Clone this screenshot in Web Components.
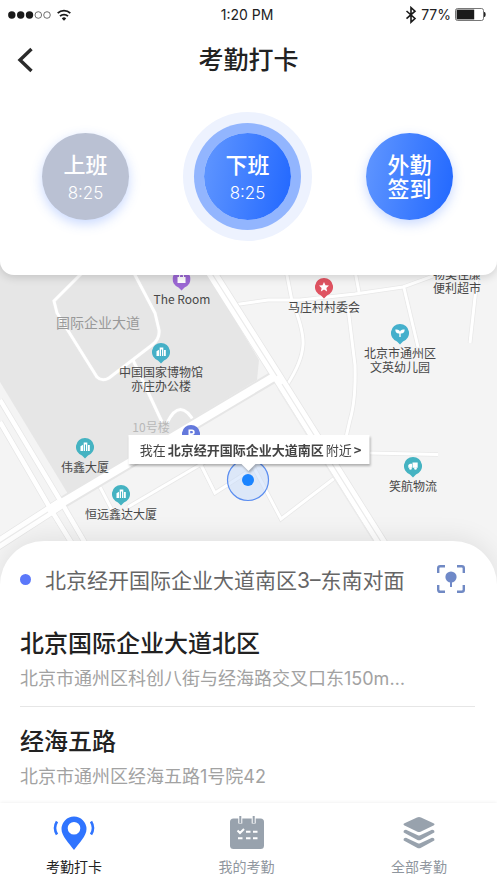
<!DOCTYPE html>
<html lang="zh-CN">
<head>
<meta charset="utf-8">
<meta name="viewport" content="width=device-width,initial-scale=1">
<title>考勤打卡</title>
<style>
  body{
    margin:0;
    background:#fff;
    color:#222;
    font-family:Inter,"Noto Sans CJK SC",sans-serif;
    --color-primary:#2f74ff;
    --color-linear:linear-gradient(100deg,#5c93ff 8%,#266bff 92%);
  }
</style>
</head>
<body>
<attend-page>
  <status-bar slot="top" time="1:20 PM" battery="77%"></status-bar>
  <nav-header slot="top">考勤打卡</nav-header>
  <punch-group slot="top">
    <punch-button type="done">上班<span slot="time">8:25</span></punch-button>
    <punch-button type="active">下班<span slot="time">8:25</span></punch-button>
    <punch-button type="out">外勤<br>签到</punch-button>
  </punch-group>

  <area-map slot="map">
    <map-pin x="182" y="24" icon="bag" color="#9b67d3">The Room</map-pin>
    <map-pin x="98" y="67" type="road">国际企业大道</map-pin>
    <map-pin x="161" y="97" icon="building" color="#45b0c7">中国国家博物馆<br>亦庄办公楼</map-pin>
    <map-pin x="324" y="32" icon="star" color="#df5361">马庄村村委会</map-pin>
    <map-pin x="457" y="26" type="text">物美佳廉<br>便利超市</map-pin>
    <map-pin x="400" y="78" icon="leaf" color="#45b0cc">北京市通州区<br>文英幼儿园</map-pin>
    <map-pin x="151" y="172" type="faint">10号楼</map-pin>
    <map-pin x="191" y="179" icon="parking" color="#6479dc"></map-pin>
    <map-pin x="85" y="192" icon="building" color="#45b3c2">伟鑫大厦</map-pin>
    <map-pin x="121" y="239" icon="building" color="#45b3c2">恒远鑫达大厦</map-pin>
    <map-pin x="413" y="211" icon="truck" color="#45b3c2">笑航物流</map-pin>
    <map-callout>北京经开国际企业大道南区</map-callout>
  </area-map>

  <place-sheet slot="sheet">
    <span slot="current">北京经开国际企业大道南区3–东南对面</span>
    <place-item>北京国际企业大道北区<span slot="address">北京市通州区科创八街与经海路交叉口东150m…</span></place-item>
    <place-item>经海五路<span slot="address">北京市通州区经海五路1号院42</span></place-item>
  </place-sheet>

  <tab-bar slot="tabs">
    <tab-item icon="punch" active>考勤打卡</tab-item>
    <tab-item icon="calendar">我的考勤</tab-item>
    <tab-item icon="layers">全部考勤</tab-item>
  </tab-bar>
</attend-page>

<script>
class BaseElement extends HTMLElement{
  constructor(){
    super();
    this.shadow=this.attachShadow({mode:'open'});
  }
  connectedCallback(){
    this.shadow.innerHTML=this.render();
  }
}

class AttendPage extends BaseElement{
  render(){
    return `
<style>
    :host{
      display:flex;
      flex-direction:column;
      min-height:100vh;
    }
    header{
      position:relative;
      z-index:2;
      background:#fff;
      border-radius:0 0 14px 14px;
      box-shadow:0 2px 10px rgba(0,0,0,.16);
    }
    /* the map runs on under the round corners of the card and the sheet */
    main{
      flex:1;
      display:flex;
      min-height:336px;
      margin:-20px 0 -50px;
    }
    section{
      position:relative;
      z-index:2;
      background:#fff;
      border-radius:44px 44px 0 0;
      box-shadow:0 -4px 24px rgba(0,0,0,.08);
    }
    footer{
      position:relative;
      z-index:3;
      background:#fff;
      box-shadow:0 0 4px rgba(0,0,0,.08);
    }
</style>
<header><slot name="top"></slot></header>
<main><slot name="map"></slot></main>
<section><slot name="sheet"></slot></section>
<footer><slot name="tabs"></slot></footer>
    `
  }
}

class StatusBar extends BaseElement{
  render(){
    return `
<style>
    :host{
      display:grid;
      grid-template-columns:1fr auto 1fr;
      align-items:center;
      height:29px;
      padding:0 11px 0 8px;
      font-size:14px;
      font-weight:400;
    }
    div{
      display:flex;
      align-items:center;
      gap:6px;
    }
    .right{
      justify-content:flex-end;
      gap:4px;
    }
    svg{display:block}
</style>
<div>
  <svg width="43" height="8" viewBox="0 0 43 8">
    <g fill="#1a1a1a"><circle cx="3.8" cy="4" r="3.7"/><circle cx="12.7" cy="4" r="3.7"/><circle cx="21.5" cy="4" r="3.7"/></g>
    <g fill="none" stroke="#333" stroke-width=".7"><circle cx="30.3" cy="4" r="3.3"/><circle cx="39" cy="4" r="3.3"/></g>
  </svg>
  <svg width="14" height="12" viewBox="0 0 14 12">
    <g fill="none" stroke="#1a1a1a" stroke-width="1.8"><path d="M.7 4.1a9 9 0 0 1 12.6 0"/><path d="M3 7.2a5.7 5.7 0 0 1 8 0"/></g>
    <path d="M4.8 9.4a3.2 3.2 0 0 1 4.4 0L7 11.8z" fill="#1a1a1a"/>
  </svg>
</div>
<span>${this.getAttribute("time")}</span>
<div class="right">
  <svg width="12" height="18" viewBox="0 0 12 18"><path d="M1.5 5 10 12.5 6 16.2V1.6L10 5.2 1.5 12.7" fill="none" stroke="#1a1a1a" stroke-width="1.6"/></svg>
  <span>${this.getAttribute("battery")}</span>
  <svg width="31" height="13" viewBox="0 0 31 13">
    <rect x=".5" y=".5" width="28" height="12" rx="2" fill="#fff" stroke="#555" stroke-width=".8"/>
    <rect x="1.6" y="1.6" width="17.6" height="9.8" fill="#1a1a1a"/>
    <path d="M29.6 4.3q1.2 2.2 0 4.4z" fill="#1a1a1a" stroke="#1a1a1a"/>
  </svg>
</div>
    `
  }
}

class NavHeader extends BaseElement{
  render(){
    return `
<style>
    :host{
      display:grid;
      grid-template-columns:1fr auto 1fr;
      align-items:center;
      height:62px;
      padding:0 16px;
    }
    button{
      justify-self:start;
      padding:0;
      border:0;
      background:none;
    }
    svg{display:block}
    h1{
      margin:0;
      font-size:25px;
      line-height:36px;
      font-weight:500;
    }
</style>
<button aria-label="返回"><svg width="20" height="26" viewBox="0 0 20 26"><path d="M15.500 2 4 13l11.500 11" fill="none" stroke="#2b2b2b" stroke-width="3.400"/></svg></button>
<h1><slot></slot></h1>
    `
  }
}

class PunchGroup extends BaseElement{
  render(){
    return `
<style>
    :host{
      display:flex;
      justify-content:space-between;
      padding:42px 44px 55px 42px;
    }
</style>
<slot></slot>
    `
  }
}

class PunchButton extends BaseElement{
  render(){
    return `
<style>
    :host{display:block}
    button{
      display:flex;
      flex-direction:column;
      align-items:center;
      justify-content:center;
      width:87px;
      height:87px;
      padding:0;
      border:0;
      border-radius:50%;
      background:var(--color-linear);
      box-shadow:0 4px 12px rgba(60,120,255,.28);
      color:#fff;
      font:500 22px/24px Inter,"Noto Sans CJK SC",sans-serif;
    }
    .done,.active{padding-top:4px}
    .done{background:#bac1d3}
    .active{box-shadow:0 0 0 10px #92b5fe,0 0 0 21px #edf2fe}
    ::slotted([slot=time]){
      margin-top:4px;
      font-size:17px;
      font-weight:300;
    }
</style>
<button class="${this.getAttribute("type")}"><span><slot></slot></span><slot name="time"></slot></button>
    `
  }
}

class AreaMap extends BaseElement{
  render(){
    const double=["M0 400 60 500 95 560","M0 422 50 508 82 560"];
    const thin=[
      "M100 255 54 301 57 313 97 377Q102 382 109 378L152 345Q160 339 159 330L155 313 135 275 123 255",
      "M133 360 162 422","M167 423Q180 396 195 423",
      "M233 305 268 300H300L355 294 403 287 436 275 460 262",
      "M283 255 292 301Q304 330 303 345 302 362 287 385",
      "M352 255 359 292","M348 308 355 365Q356 400 350 420L344 446",
      "M404 288 418 347","M478 270 470 343","M370 453 438 454.500",
      "M336 477 281 519 250 460","M128 507 215 456","M100 487 112 510","M196 455 215 493 246 473"
    ];
    return `
<style>
    :host{
      display:block;
      position:relative;
      flex:1;
      overflow:hidden;
      background:#f4f4f4;
    }
    svg{
      position:absolute;
      inset:0;
      width:100%;
      height:100%;
    }
</style>
<svg viewBox="0 255 497 336" preserveAspectRatio="none" fill="none" aria-hidden="true">
  <path d="M0 255H196L259 360 257 380 68 494 0 382z" fill="#e6e6e6"/>
  ${thin.map(d=>`<path d="${d}" stroke="#e8e8e8" stroke-width="4.500"/>`).join("")}
  ${thin.map(d=>`<path d="${d}" stroke="#fff" stroke-width="3"/>`).join("")}
  ${double.map(d=>`<path d="${d}" stroke="#e6e6e6" stroke-width="6"/>`).join("")}
  <path d="M-5 546 60 504 277 375M196 248 277 376 400 572" stroke="#e6e6e6" stroke-width="12"/>
  <path d="M-5 546 60 504M196 248 277 376 400 572" stroke="#fff" stroke-width="10.500"/>
  <path d="M55 507 277 375" stroke="#fff" stroke-width="8"/>
  ${double.map(d=>`<path d="${d}" stroke="#fff" stroke-width="4.500"/>`).join("")}
  <path d="M-5 546 48 512M209 269 277 376M282 384 400 572M278 389 396 577" stroke="#ebebeb" stroke-width="1.200"/>
  <circle cx="248" cy="480" r="20.500" fill="#c9dcfb" fill-opacity=".55" stroke="#5a8df0" stroke-width="1.200"/>
  <circle cx="248" cy="480" r="6" fill="#1b84ff"/>
</svg>
<slot></slot>
    `
  }
}

const pinIcons={
  bag:`<path d="M5 7h8v6H5z"/><path d="M7 7.500V6a2 2 0 0 1 4 0v1.500" fill="none" stroke="#fff"/>`,
  building:`<path d="M4.500 8.200 7 6.700V13H4.500zM7.700 4.500h3.600V13H10V6.500H9V13H7.700zM12 7h1.800v6H12z"/>`,
  star:`<path d="m9 4 1.500 3.200 3.500.4-2.600 2.300.7 3.500L9 11.600l-3.100 1.800.7-3.500L4 7.600l3.500-.4z"/>`,
  leaf:`<path d="M4.300 5.600C7 5 8.600 6 9 7.700 9.400 6 11 5 13.700 5.600c0 2.700-1.500 4.200-4 4V13H8.300V9.600c-2.500.200-4-1.300-4-4z"/>`,
  parking:`<path d="M6.500 4.500H10a2.600 2.600 0 0 1 0 5.400H8.200V13H6.500zM8.200 6v2.300h1.600a1.100 1.100 0 0 0 0-2.300z" fill-rule="evenodd"/>`,
  truck:`<path d="M8.500 5.500h5.200v5.300H8.500zM4.300 8 6 6.800h2v4H4.300z"/><circle cx="6.500" cy="11.500" r="1.300"/><circle cx="11.500" cy="11.500" r="1.300"/>`
};

class MapPin extends BaseElement{
  render(){
    const icon=this.getAttribute("icon");
    const type=this.getAttribute("type")||"pin";
    return `
<style>
    :host{
      position:absolute;
      left:calc(${this.getAttribute("x")} * 100% / 497);
      top:calc(${this.getAttribute("y")} * 100% / 336);
      white-space:nowrap;
    }
    div{
      display:flex;
      flex-direction:column;
      align-items:center;
      gap:1px;
      transform:translate(-50%,${icon?"-9px":"-50%"});
      color:#484848;
      font:400 12px/14px "Noto Sans CJK SC",sans-serif;
      text-align:center;
    }
    svg{display:block}
    .road{
      color:#999;
      font-size:14px;
    }
    .faint{color:#b8b8b8}
</style>
<div class="${type}">
  ${icon?`<svg width="18" height="21" viewBox="0 0 18 21" fill="#fff"><path d="M9 0a9 9 0 0 1 3 17.500L9 20.500 6 17.500A9 9 0 0 1 9 0z" fill="${this.getAttribute("color")}"/>${pinIcons[icon]}</svg>`:""}
  <span><slot></slot></span>
</div>
    `
  }
}

class MapCallout extends BaseElement{
  render(){
    return `
<style>
    :host{
      position:absolute;
      left:50%;
      top:calc(180 * 100% / 336);
    }
    button{
      position:relative;
      display:flex;
      align-items:center;
      justify-content:center;
      gap:2px;
      min-width:241px;
      height:29px;
      padding:0 6px 0 10px;
      border:0;
      background:#fff;
      color:#444;
      font:400 13px/20px "Noto Sans CJK SC",sans-serif;
      white-space:nowrap;
      transform:translateX(-50%);
      filter:drop-shadow(1px 2px 1px rgba(0,0,0,.28));
    }
    button::after{
      content:"";
      position:absolute;
      top:100%;
      left:50%;
      border:7px solid transparent;
      border-top-color:#fff;
      border-bottom:0;
      transform:translateX(-50%);
    }
    b{font-weight:700}
</style>
<button><span>我在</span><b><slot></slot></b><span>附近</span><b>&gt;</b></button>
    `
  }
}

class PlaceSheet extends BaseElement{
  render(){
    return `
<style>
    :host{
      display:block;
      padding:23px 22px 0 20px;
    }
    .current{
      display:flex;
      align-items:center;
      height:30px;
      margin-bottom:15px;
      color:#666;
      font-size:21px;
      font-weight:400;
      white-space:nowrap;
    }
    i{
      width:11px;
      height:11px;
      margin-right:14px;
      border-radius:50%;
      background:#5b78fa;
    }
    button{
      margin:0 10px 0 auto;
      padding:0;
      border:0;
      background:none;
    }
    svg{display:block}
</style>
<div class="current">
  <i></i>
  <slot name="current"></slot>
  <button aria-label="定位"><svg width="28" height="28" viewBox="0 0 28 28">
    <path d="M1.200 8V3.200q0-2 2-2H8M20 1.200h4.800q2 0 2 2V8M26.800 20v4.800q0 2-2 2H20M8 26.800H3.200q-2 0-2-2V20" fill="none" stroke="#7089c4" stroke-width="2.400"/>
    <circle cx="14" cy="12" r="5.600" fill="#6f89c8"/>
    <path d="M14 16v6" stroke="#6f89c8" stroke-width="2"/>
  </svg></button>
</div>
<slot></slot>
    `
  }
}

class PlaceItem extends BaseElement{
  render(){
    return `
<style>
    :host{
      display:block;
      padding:19px 0 15px;
      border-bottom:1px solid #e6e6e6;
    }
    :host(:last-child){
      padding-bottom:13px;
      border-color:transparent;
    }
    h2{
      margin:0 0 7px;
      font-size:24px;
      line-height:32px;
      font-weight:500;
    }
    p{
      margin:0;
      overflow:hidden;
      color:#a2a2a2;
      font-size:18px;
      line-height:24px;
      font-weight:400;
      text-overflow:ellipsis;
      white-space:nowrap;
    }
</style>
<h2><slot></slot></h2>
<p><slot name="address"></slot></p>
    `
  }
}

class TabBar extends BaseElement{
  render(){
    return `
<style>
    nav{
      display:flex;
      justify-content:space-between;
      padding:12px 50px 5px 46px;
    }
</style>
<nav><slot></slot></nav>
    `
  }
}

const tabIcons={
  punch:`<path d="M21 1.500A12.500 12.500 0 0 1 33.500 14C33.500 21 26 28 21 35 16 28 8.500 21 8.500 14A12.500 12.500 0 0 1 21 1.500zM21 7a6.300 6.300 0 1 0 0 12.600A6.300 6.300 0 0 0 21 7z" fill-rule="evenodd"/>
    <path d="M4 6.500q-4 6.500 0 13M38 6.500q4 6.500 0 13" fill="none" stroke="currentColor" stroke-width="2.600"/>`,
  calendar:`<rect x="4" y="3.500" width="34" height="30.500" rx="3.500"/>
    <g fill="none" stroke="#fff"><path d="M14.300 1v7.500M27.700 1v7.500" stroke-width="4"/><path d="m11.500 15.500 2.500 2.500 4-4M20 16.800h4.500M27 16.800h4.500M12 23.300h4.500M20 23.300h4.500M27 23.300h4.500" stroke-width="2"/></g>
    <path d="M14.300 1v7M27.700 1v7" stroke="currentColor" stroke-width="2"/>`,
  layers:`<path d="M19 2.400q2-1 4 0l12.500 5.800q2 1.100 0 2.200L23 16.400q-2 1-4 0L6.500 10.400q-2-1.100 0-2.200z"/>
    <path d="m8 14.800 11.800 5.500q1.200.5 2.400 0L34 14.800q3 .2 2.300 2.800L23 24.800q-2 1-4 0L5.700 17.600q-.7-2.600 2.300-2.800z"/>
    <path d="m8 22.800 11.800 5.500q1.200.5 2.400 0L34 22.800q3 .2 2.300 2.800L23 32.800q-2 1-4 0L5.700 25.600q-.7-2.600 2.300-2.800z"/>`
};

class TabItem extends BaseElement{
  render(){
    const active=this.hasAttribute("active");
    return `
<style>
    a{
      display:flex;
      flex-direction:column;
      align-items:center;
      gap:5px;
      color:${active?"#222":"#8f969e"};
      font-size:14px;
      line-height:22px;
      text-decoration:none;
    }
    svg{
      color:${active?"var(--color-primary)":"#98a2ad"};
      fill:currentColor;
    }
</style>
<a href="#"${active?` aria-current="page"`:""}>
  <svg width="42" height="36" viewBox="0 0 42 36">${tabIcons[this.getAttribute("icon")]}</svg>
  <span><slot></slot></span>
</a>
    `
  }
}

window.customElements.define('attend-page',AttendPage);
window.customElements.define('status-bar',StatusBar);
window.customElements.define('nav-header',NavHeader);
window.customElements.define('punch-group',PunchGroup);
window.customElements.define('punch-button',PunchButton);
window.customElements.define('area-map',AreaMap);
window.customElements.define('map-pin',MapPin);
window.customElements.define('map-callout',MapCallout);
window.customElements.define('place-sheet',PlaceSheet);
window.customElements.define('place-item',PlaceItem);
window.customElements.define('tab-bar',TabBar);
window.customElements.define('tab-item',TabItem);
</script>
</body>
</html>
